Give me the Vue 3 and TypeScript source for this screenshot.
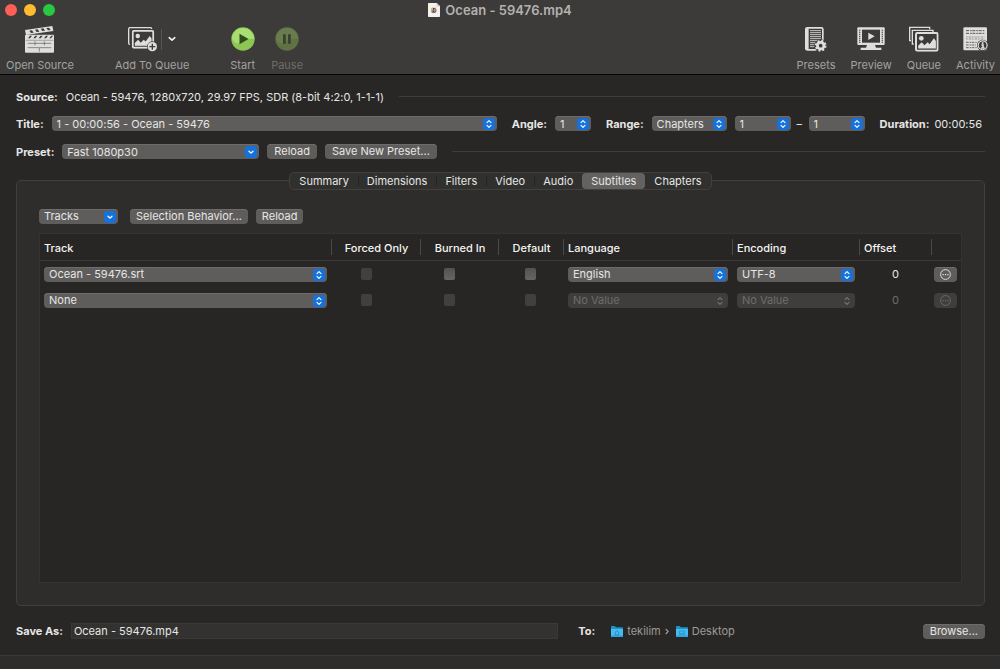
<script setup lang="ts">
import { ref } from 'vue'

interface Track {
  name: string
  language: string
  encoding: string
  offset: number
  active: boolean
}

const tabs = ['Summary', 'Dimensions', 'Filters', 'Video', 'Audio', 'Subtitles', 'Chapters']
const activeTab = ref('Subtitles')
const fileName = ref('Ocean - 59476.mp4')

const tracks: Track[] = [
  { name: 'Ocean - 59476.srt', language: 'English', encoding: 'UTF-8', offset: 0, active: true },
  { name: 'None', language: 'No Value', encoding: 'No Value', offset: 0, active: false },
]
</script>

<template>
  <svg class="defs" aria-hidden="true">
    <symbol id="updown" viewBox="0 0 12 12">
      <path d="M4 4.6 6 2.7l2 1.9M4 7.4 6 9.3l2-1.9" fill="none" stroke="currentColor" stroke-width="1.1" stroke-linecap="round" stroke-linejoin="round" />
    </symbol>
    <symbol id="down" viewBox="0 0 12 12">
      <path d="M4 5.2 6 7.1l2-1.9" fill="none" stroke="currentColor" stroke-width="1.3" stroke-linecap="round" stroke-linejoin="round" />
    </symbol>
    <symbol id="folder" viewBox="0 0 36 34">
      <path d="M0 2q0-2 2-2h9l4 4h19q2 0 2 2v8H0z" fill="#1d93c9" />
      <path d="M0 9h36v22q0 2-2 2H2q-2 0-2-2z" fill="#45bdf1" />
      <path d="M0 28h36v3q0 2-2 2H2q-2 0-2-2z" fill="#2da5dc" />
    </symbol>
    <symbol id="photo" viewBox="0 0 60 50">
      <rect x="2.5" y="2.5" width="55" height="45" rx="3" fill="#3c3b39" stroke="#dededd" stroke-width="5" />
      <circle cx="16" cy="16" r="6" fill="#dededd" />
      <path d="M8 42V35l9-9 7 8 8-8 5 5 11-15 5 7v19z" fill="#dededd" />
    </symbol>
  </svg>

  <div class="window">
    <header class="top">
      <div class="titlebar">
        <div class="lights">
          <button class="light red" aria-label="Close"></button>
          <button class="light yellow" aria-label="Minimize"></button>
          <button class="light green" aria-label="Zoom"></button>
        </div>
        <h1>
          <svg width="12" height="14" viewBox="0 0 36 42" aria-hidden="true">
            <path d="M0 2q0-2 2-2h24l10 10v30q0 2-2 2H2q-2 0-2-2z" fill="#f1f1f1" />
            <path d="M26 0v10h10z" fill="#c9c9c9" />
            <circle cx="17" cy="22" r="8" fill="#2b3f8f" />
            <path d="M8 19q2-5 8-6l-3 16q-5-4-5-10z" fill="#f0b54a" />
            <path d="M26 10 15 22l4 1-5 10 12-13-5-1z" fill="#e8953a" />
          </svg>
          Ocean - 59476.mp4
        </h1>
      </div>

      <nav class="toolbar" aria-label="Toolbar">
        <div class="tools">
          <button class="tool">
            <span class="icon">
              <svg width="29" height="27" viewBox="0 0 87 81" aria-hidden="true">
                <path d="M0 12 82 0l3 15L3 27z" fill="#dededd" />
                <path d="M13 14l8-1 5 7-8 1zM30 11l8-1 5 7-8 1zM47 8l8-1 5 7-8 1zM64 6l8-1 5 7-8 1z" fill="#3c3b39" />
                <rect y="26" width="87" height="54" rx="3" fill="#dededd" />
                <path d="M9 37l6-8h6l-6 8zM25 37l6-8h6l-6 8zM41 37l6-8h6l-6 8zM57 37l6-8h6l-6 8zM73 37l6-8h5l-6 8z" fill="#3c3b39" />
                <path d="M2 43h83" stroke="#8b8a89" stroke-width="2" />
                <path d="M8 52h71M8 65h71M30 46v12M58 46v12M43 66v11" fill="none" stroke="#5c5b59" stroke-width="2" />
              </svg>
            </span>
            <span>Open Source</span>
          </button>
          <button class="tool wide-gap">
            <span class="icon">
              <svg width="30" height="25" viewBox="0 0 90 75" aria-hidden="true">
                <path d="M6 52H5q-3 0-3-3V6q0-4 4-4h62q3 0 3 4" fill="none" stroke="#dededd" stroke-width="4" />
                <use href="#photo" x="11" y="9" width="68" height="56" />
                <circle cx="73" cy="59" r="16" fill="#3c3b39" />
                <circle cx="73" cy="59" r="14" fill="#dededd" />
                <path d="M73 50v18M64 59h18" stroke="#3c3b39" stroke-width="4" />
              </svg>
              <span class="divider"></span>
              <svg width="10" height="10" viewBox="0 0 10 10" aria-hidden="true">
                <path d="M2.2 3.7 5 6.2l2.8-2.5" fill="none" stroke="#f2f2f2" stroke-width="1.6" stroke-linecap="round" stroke-linejoin="round" />
              </svg>
            </span>
            <span>Add To Queue</span>
          </button>
          <button class="tool wide-gap">
            <span class="icon">
              <svg width="24" height="24" viewBox="0 0 24 24" aria-hidden="true">
                <circle cx="12" cy="12" r="11.7" fill="#8cc653" />
                <path d="M1 12a11 11 0 0 1 22 0q-8-1-13 3T1 12z" fill="#a8dd74" />
                <path d="M8.5 6.7v10.6l9-5.3z" fill="#2f4a1d" />
              </svg>
            </span>
            <span>Start</span>
          </button>
          <button class="tool" disabled>
            <span class="icon">
              <svg width="24" height="24" viewBox="0 0 24 24" aria-hidden="true">
                <circle cx="12" cy="12" r="11.7" fill="#5e7243" />
                <path d="M1 12a11 11 0 0 1 22 0q-8-1-13 3T1 12z" fill="#687c4e" />
                <path d="M8 7.3h2.8v9.4H8zM13 7.3h2.8v9.4H13z" fill="#3a422f" />
              </svg>
            </span>
            <span>Pause</span>
          </button>
        </div>

        <div class="tools right">
          <button class="tool">
            <span class="icon">
              <svg width="22" height="25" viewBox="0 0 66 75" aria-hidden="true">
                <rect x="2.5" y="2.5" width="51" height="66" rx="4" fill="none" stroke="#dededd" stroke-width="5" />
                <path d="M2 4h9v64H2z" fill="#dededd" />
                <path d="M15 11h33M15 17h33M15 23h33M15 29h33M15 35h33M15 41h22M15 47h16M15 53h14M15 59h14" stroke="#c9c9c8" stroke-width="3" />
                <circle cx="47" cy="56" r="19" fill="#3c3b39" />
                <circle cx="47" cy="56" r="14" fill="#dededd" />
                <circle cx="47" cy="56" r="14.5" fill="none" stroke="#dededd" stroke-width="6" stroke-dasharray="6 5.4" />
                <circle cx="47" cy="56" r="5.5" fill="#3c3b39" />
              </svg>
            </span>
            <span>Presets</span>
          </button>
          <button class="tool">
            <span class="icon">
              <svg width="28" height="24" viewBox="0 0 84 72" aria-hidden="true">
                <rect x="1" y="1" width="82" height="53" rx="3" fill="#dededd" />
                <rect x="15" y="8" width="54" height="39" fill="#3c3b39" />
                <path d="M8 8v40M76 8v40" stroke="#3c3b39" stroke-width="4" stroke-dasharray="3 3" />
                <path d="M34 17v22l19-11z" fill="#dededd" />
                <path d="M30 54h24l3 8h16v7H11v-7h16z" fill="#dededd" />
              </svg>
            </span>
            <span>Preview</span>
          </button>
          <button class="tool">
            <span class="icon">
              <svg width="30" height="26" viewBox="0 0 90 78" aria-hidden="true">
                <path d="M6 44H2V4h60v6M14 54h-4V13h62v6" fill="none" stroke="#dededd" stroke-width="4" />
                <use href="#photo" x="18" y="18" width="71" height="59" />
              </svg>
            </span>
            <span>Queue</span>
          </button>
          <button class="tool">
            <span class="icon">
              <svg width="26" height="24" viewBox="0 0 78 72" aria-hidden="true">
                <rect x="1" y="1" width="71" height="69" rx="4" fill="#dededd" />
                <path d="M9 11h55M9 19h55" stroke="#3c3b39" stroke-width="2.5" stroke-dasharray="9 3 5 2" />
                <path d="M9 30h55M9 36h55" stroke="#8b8a89" stroke-width="2.5" stroke-dasharray="5 3 8 2" />
                <path d="M9 46h32M9 54h30M9 62h32" stroke="#4d4c4a" stroke-width="2.5" stroke-dasharray="8 3 4 2" />
                <circle cx="59" cy="55" r="17" fill="#3c3b39" />
                <circle cx="59" cy="55" r="15" fill="#dededd" />
                <circle cx="59" cy="55" r="11.5" fill="#3c3b39" />
                <path d="M59 46v5M55 54h5v9M54 63h11" fill="none" stroke="#dededd" stroke-width="5" />
              </svg>
            </span>
            <span>Activity</span>
          </button>
        </div>
      </nav>
    </header>

    <main>
      <div class="row source">
        <b>Source:</b>
        <span>Ocean - 59476, 1280x720, 29.97 FPS, SDR (8-bit 4:2:0, 1-1-1)</span>
        <hr />
      </div>

      <div class="row title">
        <label for="title">Title:</label>
        <span class="popup grow">
          <select id="title"><option>1 - 00:00:56 - Ocean - 59476</option></select>
          <svg class="badge"><use href="#updown" /></svg>
        </span>
        <label for="angle" class="spaced">Angle:</label>
        <span class="popup angle">
          <select id="angle"><option>1</option></select>
          <svg class="badge"><use href="#updown" /></svg>
        </span>
        <label for="range" class="spaced">Range:</label>
        <span class="popup range">
          <select id="range"><option>Chapters</option></select>
          <svg class="badge"><use href="#updown" /></svg>
        </span>
        <span class="popup chapter">
          <select aria-label="First chapter"><option>1</option></select>
          <svg class="badge"><use href="#updown" /></svg>
        </span>
        <span class="dash">–</span>
        <span class="popup chapter">
          <select aria-label="Last chapter"><option>1</option></select>
          <svg class="badge"><use href="#updown" /></svg>
        </span>
        <div class="length">
          <b>Duration:</b>
          <span>00:00:56</span>
        </div>
      </div>

      <div class="row preset">
        <label for="preset">Preset:</label>
        <span class="popup presets">
          <select id="preset"><option>Fast 1080p30</option></select>
          <svg class="badge"><use href="#down" /></svg>
        </span>
        <button class="push">Reload</button>
        <button class="push">Save New Preset...</button>
        <hr />
      </div>

      <section class="tabbed">
        <div class="tabs" role="tablist">
          <button
            v-for="tab in tabs"
            :key="tab"
            role="tab"
            class="tab"
            :class="{ selected: tab === activeTab }"
            :aria-selected="tab === activeTab"
            @click="activeTab = tab"
          >
            {{ tab }}
          </button>
        </div>

        <div class="panel">
          <div class="actions">
            <span class="popup tracks">
              <select aria-label="Tracks"><option>Tracks</option></select>
              <svg class="badge"><use href="#down" /></svg>
            </span>
            <button class="push">Selection Behavior...</button>
            <button class="push">Reload</button>
          </div>

          <div class="list">
            <table>
              <colgroup>
                <col />
                <col class="c-forced" />
                <col class="c-burned" />
                <col class="c-default" />
                <col class="c-language" />
                <col class="c-encoding" />
                <col class="c-offset" />
                <col class="c-more" />
              </colgroup>
              <thead>
                <tr>
                  <th>Track</th>
                  <th class="mid">Forced Only</th>
                  <th class="mid">Burned In</th>
                  <th class="mid">Default</th>
                  <th>Language</th>
                  <th>Encoding</th>
                  <th>Offset</th>
                  <th></th>
                </tr>
              </thead>
              <tbody>
                <tr v-for="track in tracks" :key="track.name" :class="{ off: !track.active }">
                  <td>
                    <span class="popup">
                      <select aria-label="Track"><option>{{ track.name }}</option></select>
                      <svg class="badge"><use href="#updown" /></svg>
                    </span>
                  </td>
                  <td class="forced"><input type="checkbox" aria-label="Forced Only" disabled /></td>
                  <td class="burned"><input type="checkbox" aria-label="Burned In" :disabled="!track.active" /></td>
                  <td class="default"><input type="checkbox" aria-label="Default" :disabled="!track.active" /></td>
                  <td>
                    <span class="popup">
                      <select aria-label="Language" :disabled="!track.active"><option>{{ track.language }}</option></select>
                      <svg class="badge"><use href="#updown" /></svg>
                    </span>
                  </td>
                  <td>
                    <span class="popup">
                      <select aria-label="Encoding" :disabled="!track.active"><option>{{ track.encoding }}</option></select>
                      <svg class="badge"><use href="#updown" /></svg>
                    </span>
                  </td>
                  <td class="offset">{{ track.offset }}</td>
                  <td class="more">
                    <button class="push" aria-label="More" :disabled="!track.active">
                      <svg width="11" height="11" viewBox="0 0 11 11" aria-hidden="true">
                        <circle cx="5.5" cy="5.5" r="4.9" fill="none" stroke="currentColor" stroke-width="0.9" />
                        <path d="M2.5 5h1.2v1.2H2.5zM4.9 5h1.2v1.2H4.9zM7.3 5h1.2v1.2H7.3z" fill="currentColor" />
                      </svg>
                    </button>
                  </td>
                </tr>
              </tbody>
            </table>
          </div>
        </div>
      </section>

      <div class="save">
        <div class="save-name">
          <label for="file">Save As:</label>
          <input id="file" v-model="fileName" type="text" />
        </div>
        <div class="save-path">
          <b>To:</b>
          <div class="crumbs">
            <svg width="12" height="11" viewBox="0 0 36 33" aria-hidden="true">
              <use href="#folder" width="36" height="34" />
              <path d="M11 20l7-6 7 6M13 20v7h10v-7" fill="none" stroke="#2487b8" stroke-width="2.5" />
            </svg>
            <span>tekilim</span>
            <svg class="sep" width="4" height="7" viewBox="0 0 4 7" aria-hidden="true">
              <path d="M.7 1 3.2 3.5.7 6" fill="none" stroke="currentColor" stroke-width="1.1" />
            </svg>
            <svg width="12" height="11" viewBox="0 0 36 33" aria-hidden="true">
              <use href="#folder" width="36" height="34" />
              <path d="M10 15h16v10H10zM13 22h10" fill="none" stroke="#2487b8" stroke-width="2" />
            </svg>
            <span>Desktop</span>
          </div>
          <button class="push">Browse...</button>
        </div>
      </div>
    </main>

    <footer></footer>
  </div>
</template>

<style>
body {
  margin: 0;
  background: #282725;
}
</style>

<style scoped>
.defs {
  position: absolute;
  width: 0;
  height: 0;
}

.window {
  display: flex;
  flex-direction: column;
  min-height: 100vh;
  background: #282725;
  color: #e6e6e5;
  font: 11px/14px Inter, "Liberation Sans", sans-serif;
  font-feature-settings: "calt" 0;
}

button,
select,
input {
  margin: 0;
  border: 0;
  font: inherit;
  font-feature-settings: inherit;
  color: inherit;
  box-sizing: border-box;
}

label,
b {
  font-weight: 700;
  white-space: nowrap;
}

/* Title bar and toolbar */
.top {
  background: #3c3b39;
  border-bottom: 1px solid #050505;
}

.titlebar {
  display: grid;
  grid-template-columns: 1fr auto 1fr;
  align-items: center;
  height: 20px;
}

.lights {
  display: flex;
  gap: 7px;
  padding-left: 5px;
}

.light {
  width: 12px;
  height: 12px;
  padding: 0;
  border-radius: 50%;
}

.red { background: #ff5f57; }
.yellow { background: #febc2e; }
.green { background: #28c840; }

h1 {
  display: flex;
  align-items: center;
  gap: 5px;
  margin: 0;
  font-size: 13px;
  line-height: 18px;
  font-weight: 600;
  color: #b3b2b1;
}

.toolbar {
  display: flex;
  justify-content: space-between;
  height: 54px;
  padding: 0 5px 0 6px;
}

.tools {
  display: flex;
  gap: 16px;
}

.tools.right {
  gap: 15px;
}

.tool {
  display: flex;
  flex-direction: column;
  align-items: center;
  padding: 0;
  background: none;
  color: #a3a2a0;
  line-height: 14px;
  white-space: nowrap;
}

.tool:disabled {
  color: #6c6b69;
}

.wide-gap {
  margin-left: 25px;
}

.icon {
  display: flex;
  align-items: center;
  height: 38px;
}

.divider {
  width: 1px;
  height: 21px;
  margin: 0 5px 0 3px;
  background: #575654;
}

/* Form rows */
main {
  display: flex;
  flex-direction: column;
  flex: 1;
  padding: 0 15px 0 16px;
}

.row {
  display: flex;
  align-items: center;
  gap: 8px;
  height: 15px;
}

.source {
  margin-top: 14px;
}

.title {
  margin-top: 12px;
}

.preset {
  margin-top: 13px;
}

hr {
  flex: 1;
  height: 1px;
  margin: 0 0 0 7px;
  border: 0;
  background: #3d3c3a;
}

.popup {
  position: relative;
  display: block;
}

.popup select {
  display: block;
  width: 100%;
  height: 15px;
  padding: 0 16px 0 5px;
  appearance: none;
  border-radius: 4px;
  background: #5f5d5c;
  box-shadow: inset 0 1px #6e6c6b;
  opacity: 1;
}

.badge {
  position: absolute;
  top: 2px;
  right: 2px;
  width: 12px;
  height: 12px;
  border-radius: 3px;
  background: #1571dc;
  color: #fff;
  pointer-events: none;
}

.popup select:disabled {
  background: #3f3e3c;
  color: #6e6d6b;
  box-shadow: none;
}

.popup select:disabled + .badge {
  background: none;
  color: #777674;
}

.push {
  height: 15px;
  padding: 0 7px;
  border-radius: 4px;
  background: #5f5d5c;
  box-shadow: inset 0 1px #6e6c6b;
  line-height: 15px;
  white-space: nowrap;
}

.grow { flex: 1; }
.angle { width: 36px; }
.range { width: 75px; }
.chapter { width: 56px; }
.presets { width: 197px; }
.tracks { width: 79px; }
.spaced { margin-left: 7px; }

.dash {
  width: 6px;
  margin: 0 -2px;
}

.length {
  display: flex;
  gap: 5px;
  margin: 0 3px 0 7px;
}

/* Tabs and panel */
.tabbed {
  display: flex;
  flex-direction: column;
  flex: 1;
  margin-top: 13px;
}

.tabs {
  display: flex;
  align-self: center;
  z-index: 1;
  height: 18px;
  box-sizing: border-box;
  border: 1px solid #41403e;
  border-radius: 5px;
  background: #30302e;
}

.tab {
  padding: 0 9px;
  height: 16px;
  background: none;
  line-height: 16px;
}

.tab + .tab:not(.selected) {
  background: linear-gradient(#262523, #262523) left center / 1px 10px no-repeat;
}

.tab.selected + .tab:not(.selected) {
  background: none;
}

.tab.selected {
  border-radius: 4px;
  background: #636260;
}

.panel {
  display: flex;
  flex-direction: column;
  flex: 1;
  margin-top: -10px;
  padding: 27px 22px 22px;
  border: 1px solid #41403e;
  border-radius: 5px;
  background: #2e2d2c;
}

.actions {
  display: flex;
  align-items: center;
  gap: 8px;
  height: 16px;
}

.actions .push {
  padding: 0 6px;
}

.tracks {
  margin-right: 4px;
}

.list {
  flex: 1;
  margin-top: 9px;
  border: 1px solid #343331;
  background: #272624;
}

table {
  width: 100%;
  table-layout: fixed;
  border-collapse: separate;
  border-spacing: 0;
}

.c-forced { width: 89px; }
.c-burned { width: 78px; }
.c-default { width: 65px; }
.c-language { width: 169px; }
.c-encoding { width: 127px; }
.c-offset { width: 72px; }
.c-more { width: 29px; }

th {
  height: 24px;
  padding: 2px 4px 0;
  border-bottom: 1px solid #3b3a38;
  background: linear-gradient(#4a4947, #4a4947) right center / 1px 16px no-repeat;
  font-weight: 500;
  text-align: left;
  color: #f4f4f3;
}

th.mid {
  text-align: center;
}

th:last-child {
  background: none;
}

td {
  height: 26px;
  padding: 0 5px 0 4px;
}

input[type='checkbox'] {
  display: block;
  width: 11px;
  height: 12px;
  appearance: none;
  border-radius: 2px;
  background: linear-gradient(#545351, #666563);
}

input[type='checkbox']:disabled {
  background: #41403e;
}

td.forced { padding-left: 29px; }
td.burned { padding-left: 23px; }
td.default { padding-left: 26px; }

td.offset {
  text-align: center;
}

.off .offset {
  color: #6e6d6b;
}

td.more {
  padding: 0 2px;
}

.more .push {
  display: flex;
  align-items: center;
  justify-content: center;
  width: 23px;
  padding: 0;
}

.more .push:disabled {
  background: #3f3e3c;
  box-shadow: none;
  color: #6e6d6b;
}

/* Destination */
.save {
  display: flex;
  gap: 20px;
  height: 16px;
  margin: 17px 0 16px;
}

.save-name {
  display: flex;
  align-items: center;
  flex: 4 1 0;
  gap: 8px;
}

.save-name input {
  flex: 1;
  min-width: 0;
  height: 16px;
  padding: 0 2px;
  border: 1px solid #3a3938;
  background: #333230;
}

.save-path {
  display: flex;
  align-items: center;
  flex: 3 1 0;
  gap: 16px;
}

.crumbs {
  display: flex;
  align-items: center;
  flex: 1;
  gap: 4px;
  color: #9c9b99;
}

.crumbs .sep {
  margin-right: 3px;
}

footer {
  height: 13px;
  border-top: 1px solid #3b3a38;
  background: #2e2d2c;
}
</style>
